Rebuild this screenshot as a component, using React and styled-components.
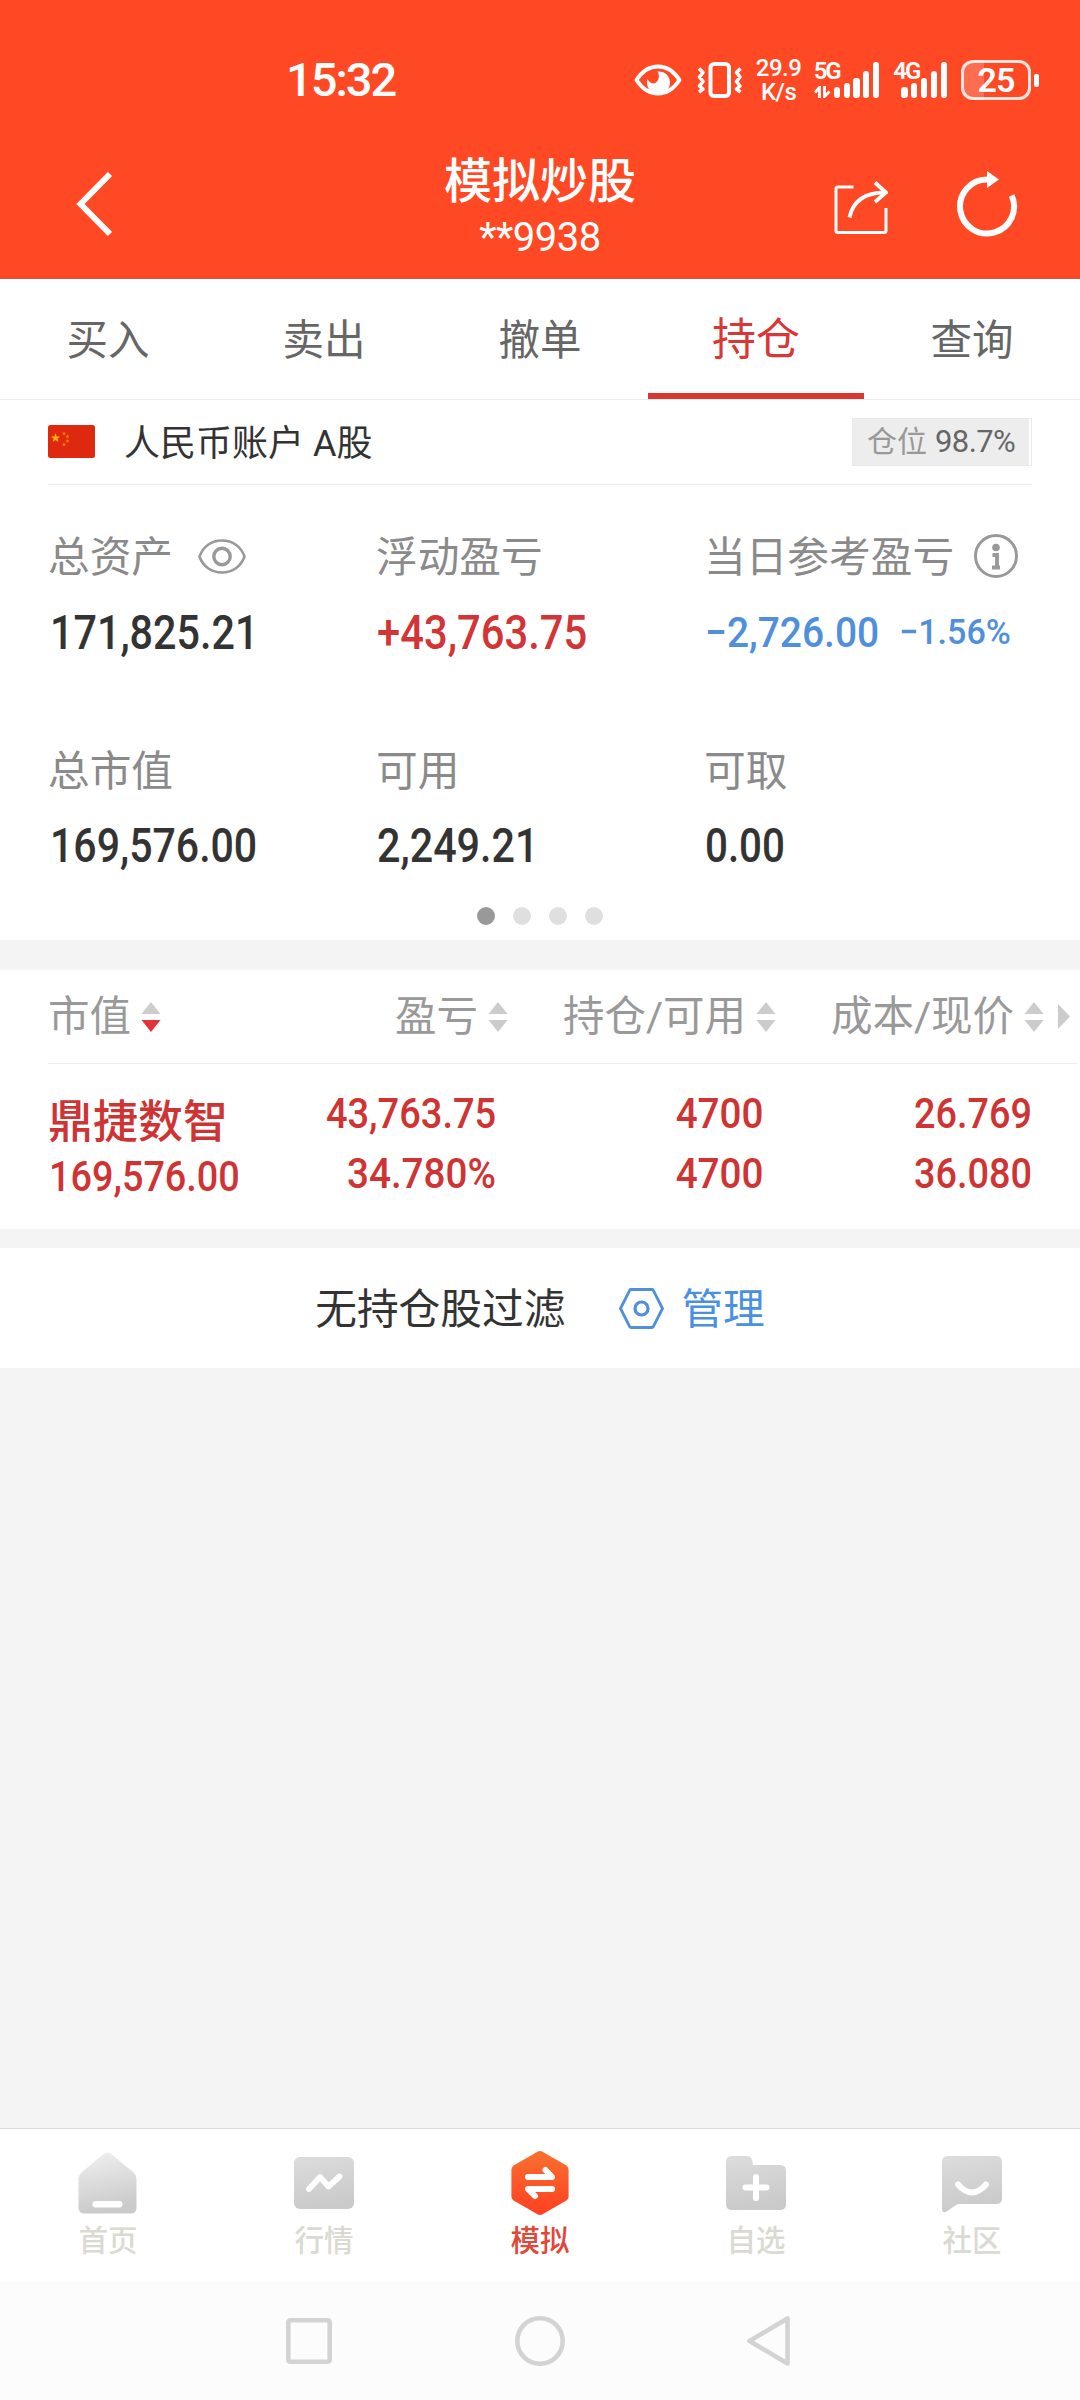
import React from 'react';
import styled, { createGlobalStyle } from 'styled-components';

const GlobalStyle = createGlobalStyle`
  * {
    box-sizing: border-box;
  }

  body {
    margin: 0;
    background: #f4f4f4;
    font-family: Roboto, "Noto Sans CJK SC", sans-serif;
    -webkit-font-smoothing: antialiased;
  }

  svg {
    display: block;
    flex: none;
  }
`;

const tabs = ['买入', '卖出', '撤单', '持仓', '查询'];

const columns = [
  { label: '市值', sort: 'desc' },
  { label: '盈亏' },
  { label: '持仓/可用' },
  { label: '成本/现价' },
];

const BARS = [11, 15, 20, 27, 36];

/* ---------- icons ---------- */

const StatusEye = () => (
  <svg width="48" height="32" viewBox="0 0 48 32">
    <path d="M2.5 16C8 7.5 15.500 2.500 24 2.500S40 7.500 45.500 16C40 24.500 32.500 29.500 24 29.500S8 24.500 2.500 16Z" fill="none" stroke="#fff" strokeWidth="4" strokeLinejoin="round" />
    <path d="M23.500 7.500C31 7 36 12 36 18.500S31 30 24.500 30 13 25 13 18.500q0-1.500.6-3.500c1.400 4 5.400 5.500 8.400 3.500s4-7.500 1.500-11Z" fill="#fff" />
  </svg>
);

const Vibrate = () => (
  <svg width="46" height="36" viewBox="0 0 46 36" fill="none" stroke="#fff" strokeWidth="4">
    <rect x="13.500" y="2" width="18.500" height="32" rx="3.500" />
    <path d="M2 6.500l4 4-3.500 4.500 3.500 4.500-3.500 4.500 3.500 3-4 3M43.500 6.500l-4 4 3.500 4.500-3.500 4.500 3.500 4.500-3.500 3 4 3" strokeWidth="3.600" strokeLinejoin="round" />
  </svg>
);

const DataArrows = () => (
  <svg width="17" height="12" viewBox="0 0 17 12" fill="none" stroke="#fff" strokeWidth="2.800">
    <path d="M1 6.500l4.500-5V12M10.500 0v10.500l5-5" />
  </svg>
);

const Back = () => (
  <svg width="38" height="66" viewBox="0 0 38 66">
    <path d="M35 3L5.500 33 35 63" fill="none" stroke="#fff" strokeWidth="6" />
  </svg>
);

const Share = () => (
  <svg width="54" height="53" viewBox="0 0 54 53" fill="none" stroke="#fff" strokeWidth="3">
    <path d="M19.500 6H4Q2 6 2 8v41.500q0 2 2 2h46q2 0 2-2V27" />
    <path d="M15.500 36.500C19 20 31 11.500 51 11.500" strokeWidth="3.800" />
    <path d="M41 1.500l11 10-11 9.500" strokeWidth="3.800" />
  </svg>
);

const Refresh = () => (
  <svg width="62" height="68" viewBox="0 0 62 68">
    <path d="M31 11a27 27 0 1 0 24.700 16" fill="none" stroke="#fff" strokeWidth="6" transform="translate(0 -1.500)" />
    <path d="M31 1v17l12-8.500Z" fill="#fff" />
  </svg>
);

const star = (cx, cy, r) =>
  Array.from({ length: 10 }, (_, i) => {
    const a = (Math.PI / 5) * i - Math.PI / 2;
    const k = i % 2 ? r * 0.4 : r;
    return `${cx + k * Math.cos(a)},${cy + k * Math.sin(a)}`;
  }).join(' ');

const Flag = () => (
  <svg width="47" height="33" viewBox="0 0 47 33">
    <rect width="47" height="33" rx="2.500" fill="#de2910" />
    <g fill="#ffb400">
      <polygon points={star(7.5, 13, 5)} />
      <g opacity=".65">
        <polygon points={star(16, 8.5, 2.2)} />
        <polygon points={star(19.5, 11.5, 2.2)} />
        <polygon points={star(19.5, 16, 2.2)} />
        <polygon points={star(16, 19.5, 2.2)} />
      </g>
    </g>
  </svg>
);

const Eye = () => (
  <svg width="48" height="35" viewBox="0 0 48 35" fill="none" stroke="#999">
    <path d="M1.500 17.500C5 7.500 13.500 1.500 24 1.500s19 6 22.500 16c-3.500 10-12 16-22.500 16S5 27.500 1.500 17.500Z" strokeWidth="2.600" />
    <circle cx="24" cy="17.500" r="8.200" strokeWidth="3.400" />
  </svg>
);

const Info = () => (
  <svg width="44" height="44" viewBox="0 0 44 44">
    <circle cx="22" cy="22" r="20.500" fill="none" stroke="#999" strokeWidth="3" />
    <circle cx="22" cy="13.500" r="3.800" fill="#999" />
    <path d="M18.500 21H23v12.500M18 33.500h8" fill="none" stroke="#999" strokeWidth="3.800" />
  </svg>
);

const Sort = ({ active }) => (
  <svg width="20" height="30" viewBox="0 0 20 30">
    <path d="M10 0l9.500 12H.5Z" fill="#ccc" />
    <path d="M10 30l9.500-12H.5Z" fill={active ? '#e0343a' : '#ccc'} />
  </svg>
);

const More = () => (
  <svg width="12" height="25" viewBox="0 0 12 25">
    <path d="M0 0l12 12.500L0 25Z" fill="#ccc" />
  </svg>
);

const Hexagon = () => (
  <svg width="45" height="41" viewBox="0 0 45 41" fill="none" stroke="#4f8fdb">
    <path d="M12 1.500h21q.8 0 1.200.7L43.500 20.500 34.200 38.800q-.4.700-1.200.700H12q-.8 0-1.200-.700L1.500 20.500 10.800 2.200q.4-.7 1.200-.7Z" strokeWidth="2.800" />
    <circle cx="22.500" cy="20.500" r="6.500" strokeWidth="3.200" />
  </svg>
);

const Grey = ({ id, from = '#dcdcdc' }) => (
  <linearGradient id={id} x1="0" y1="0" x2="0.2" y2="1">
    <stop offset="0" stopColor={from} />
    <stop offset="1" stopColor="#cacaca" />
  </linearGradient>
);

const HomeIcon = () => (
  <svg width="60" height="64" viewBox="0 0 60 64">
    <Grey id="home" from="#f0f0f0" />
    <path d="M26 2.800q3.500-2.600 7 0L55.500 21.500q3 2.600 3 6V56.500q0 6-6 6H6.500q-6 0-6-6v-29q0-3.400 3-6Z" fill="url(#home)" />
    <rect x="14.500" y="50" width="30" height="6.500" rx="3.200" fill="#fff" />
  </svg>
);

const TrendIcon = () => (
  <svg width="60" height="64" viewBox="0 0 60 64">
    <Grey id="trend" />
    <rect y="6" width="60" height="52" rx="6" fill="url(#trend)" />
    <path d="M15 38l11-12 8.500 9.500L45.500 25.500" fill="none" stroke="#fff" strokeWidth="5.800" strokeLinecap="round" strokeLinejoin="round" />
  </svg>
);

const TradeIcon = () => (
  <svg width="60" height="64" viewBox="0 0 60 64">
    <linearGradient id="trade" x1="0" y1="0" x2="0" y2="1">
      <stop offset="0" stopColor="#f8702f" />
      <stop offset="1" stopColor="#ff4021" />
    </linearGradient>
    <path d="M27.500.7q2.500-1.400 5 0L56 14.200q2.600 1.600 2.600 4.600v26.400q0 3-2.600 4.600L32.500 63.300q-2.500 1.400-5 0L4 49.800q-2.600-1.600-2.600-4.600V18.800q0-3 2.600-4.600Z" fill="url(#trade)" />
    <path d="M18 26h24L35.500 19M42 38H18l7 7" fill="none" stroke="#fff" strokeWidth="6" strokeLinecap="round" strokeLinejoin="round" />
  </svg>
);

const WatchIcon = () => (
  <svg width="60" height="64" viewBox="0 0 60 64">
    <Grey id="watch" />
    <path d="M6 5h15q5.500 0 6 9h27q6 0 6 6v33q0 6-6 6H6q-6 0-6-6V11q0-6 6-6Z" fill="url(#watch)" />
    <path d="M30 26v21M19.500 36.500h21" stroke="#fff" strokeWidth="6" strokeLinecap="round" />
  </svg>
);

const ForumIcon = () => (
  <svg width="60" height="64" viewBox="0 0 60 64">
    <Grey id="forum" />
    <path d="M6 5h48q6 0 6 6v36q0 6-6 6H15.500L4.500 60.500Q0 62.500 0 58V11q0-6 6-6Z" fill="url(#forum)" />
    <path d="M16 33.500q14 16 28 0" fill="none" stroke="#fff" strokeWidth="6" strokeLinecap="round" />
  </svg>
);

const bottomItems = [
  { label: '首页', Icon: HomeIcon },
  { label: '行情', Icon: TrendIcon },
  { label: '模拟', Icon: TradeIcon, active: true },
  { label: '自选', Icon: WatchIcon },
  { label: '社区', Icon: ForumIcon },
];

/* ---------- layout ---------- */

const Screen = styled.div`
  display: flex;
  flex-direction: column;
  width: 1080px;
  height: 2400px;
  overflow: hidden;
  background: #f4f4f4;
  color: #333;
`;

const Top = styled.header`
  height: 279px;
  background: #ff4925;
  color: #fff;
  border-bottom: 1px solid #d3583f;
`;

const StatusBar = styled.div`
  display: flex;
  align-items: center;
  height: 120px;
  padding: 40px 41px 0 286px;
`;

const Clock = styled.span`
  flex: 1;
  font-size: 47px;
  font-weight: 500;
  line-height: 82px;
  letter-spacing: -2px;
`;

const StatusIcons = styled.div`
  display: flex;
  align-items: center;
`;

const VibrateSlot = styled.div`
  margin: 0 13px 0 15px;
`;

const Speed = styled.div`
  width: 46px;
  font-size: 24px;
  line-height: 24px;
  font-weight: 500;
  letter-spacing: -0.5px;
  text-align: center;
`;

const Network = styled.div`
  display: flex;
  align-items: flex-end;
  height: 36px;
  margin-left: ${(p) => p.$gap}px;
`;

const NetworkLabel = styled.div`
  display: flex;
  flex-direction: column;
  justify-content: space-between;
  width: ${(p) => p.$width}px;
  height: 36px;
  font-size: 24px;
  line-height: 18px;
  font-weight: 600;
  white-space: nowrap;
  letter-spacing: -2px;
`;

const Bars = styled.div`
  display: flex;
  align-items: flex-end;
  gap: 3.7px;
`;

const Bar = styled.i`
  width: 6.2px;
  height: ${(p) => p.$height}px;
  border-radius: 3px;
  background: #fff;
`;

const Battery = styled.div`
  display: flex;
  align-items: center;
  justify-content: center;
  width: 70px;
  height: 40px;
  margin-left: 14px;
  border: 3px solid rgba(255, 255, 255, 0.85);
  border-radius: 12px;
  background: linear-gradient(90deg, rgba(255, 255, 255, 0.2) 20px, transparent 20px);
  font-size: 34px;
  font-weight: 600;
  letter-spacing: -1px;
  line-height: 34px;
`;

const BatteryTip = styled.i`
  width: 5px;
  height: 13px;
  margin-left: 3px;
  border-radius: 2px;
  background: #fff;
`;

const TitleBar = styled.div`
  display: grid;
  grid-template-columns: 315px 300px 1fr;
  align-items: center;
  height: 158px;
  padding: 10px 62px 0 75px;
`;

const Titles = styled.div`
  display: flex;
  flex-direction: column;
  align-items: center;
  margin-top: 6px;
  white-space: nowrap;
`;

const Title = styled.h1`
  margin: 0;
  font-size: 48px;
  font-weight: 500;
  line-height: 62px;
`;

const Subtitle = styled.span`
  font-size: 40px;
  line-height: 50px;
  letter-spacing: -0.5px;
`;

const Actions = styled.div`
  display: flex;
  align-items: center;
  justify-content: flex-end;
  gap: 68px;
`;

const ShareSlot = styled.div`
  padding-top: 6px;
`;

const Tabs = styled.nav`
  display: flex;
  height: 121px;
  background: #fff;
  border-bottom: 1px solid #ededed;
`;

const Tab = styled.div`
  flex: 1;
  height: 120px;
  padding-top: 1px;
  text-align: center;
  line-height: 121px;
  font-size: ${(p) => (p.$active ? 44 : 41.5)}px;
  color: ${(p) => (p.$active ? '#d93636' : '#666')};
  border-bottom: 6px solid ${(p) => (p.$active ? '#da3734' : 'transparent')};
`;

const Summary = styled.section`
  height: 540px;
  padding: 0 48px;
  background: #fff;
`;

const Account = styled.div`
  display: flex;
  align-items: center;
  height: 85px;
  padding-bottom: 1px;
  border-bottom: 1px solid #ededed;
`;

const AccountName = styled.span`
  flex: 1;
  margin-left: 29px;
  padding-top: 4px;
  font-size: 36px;
  line-height: 80px;
`;

const Position = styled.div`
  width: 180px;
  height: 48px;
  padding-right: 2px;
  border: 1px solid #e9e9e9;
`;

const PositionFill = styled.div`
  display: flex;
  align-items: center;
  height: 46px;
  padding-left: 14px;
  gap: 8px;
  background: #ededed;
  color: #666;
  font-size: 31px;
  line-height: 48px;
  letter-spacing: -0.6px;
`;

const PositionLabel = styled.span`
  color: #999;
  font-size: 30px;
  letter-spacing: 0;
`;

const Figures = styled.div`
  display: grid;
  grid-template-columns: repeat(3, 328px);
  row-gap: 83px;
  padding-top: 41px;
`;

const FigureLabel = styled.div`
  display: flex;
  align-items: center;
  height: 60px;
  color: #8a8a8a;
  font-size: 41.7px;
  line-height: 60px;
  white-space: nowrap;
`;

const FigureText = styled.span`
  padding-top: 3px;
`;

const IconSlot = styled.span`
  margin-left: ${(p) => p.$gap}px;
`;

const FigureValues = styled.div`
  display: flex;
  align-items: center;
  height: 48px;
  margin-top: ${(p) => p.$gap}px;
  padding-left: ${(p) => p.$inset || 0}px;
  gap: ${(p) => p.$spread || 0}px;
  color: ${(p) => p.$color};
`;

const Num = styled.span`
  display: inline-block;
  font-size: ${(p) => p.$size}px;
  line-height: 1.1;
  font-weight: 500;
  white-space: nowrap;
  transform: scaleX(${(p) => p.$stretch || 0.86});
  transform-origin: ${(p) => p.$origin || 'left'} center;
`;

const Dots = styled.div`
  display: flex;
  justify-content: center;
  gap: 18px;
  margin-top: 37px;
`;

const Dot = styled.i`
  width: 18px;
  height: 18px;
  border-radius: 50%;
  background: ${(p) => (p.$active ? '#999' : '#dfdfdf')};
`;

const Holdings = styled.section`
  height: 259px;
  margin-top: 30px;
  padding-left: 48px;
  background: #fff;
`;

const HoldingGrid = styled.div`
  display: grid;
  grid-template-columns: 180px 280px 268px 268px 1fr;
`;

const HoldingHead = styled(HoldingGrid)`
  height: 94px;
  margin-right: 3px;
  border-bottom: 1px solid #ededed;
`;

const HeadCell = styled.div`
  display: flex;
  align-items: center;
  justify-content: ${(p) => (p.$left ? 'flex-start' : 'flex-end')};
  gap: 10px;
  color: #999;
  font-size: 41.5px;
  line-height: 92px;
  white-space: nowrap;
`;

const HeadText = styled.span`
  padding-top: 1px;
`;

const MoreCell = styled.div`
  display: flex;
  align-items: center;
  padding-left: 14px;
`;

const HoldingRow = styled(HoldingGrid)`
  padding-top: 20px;
  color: #cf3434;
`;

const StockCell = styled.div`
  display: flex;
  flex-direction: column;
  align-items: flex-start;
  padding: 8px 0 0 1px;
`;

const StockName = styled.span`
  margin-left: -1px;
  font-size: 45px;
  font-weight: 500;
  line-height: 62px;
  white-space: nowrap;
`;

const ValueCell = styled.div`
  display: flex;
  flex-direction: column;
  align-items: flex-end;
  gap: 14px;
  padding: 7px ${(p) => p.$inset || 12}px 0 0;
`;

const Filter = styled.section`
  display: flex;
  align-items: center;
  justify-content: center;
  height: 120px;
  margin-top: 19px;
  background: #fff;
  font-size: 41.7px;
  line-height: 114px;
`;

const FilterText = styled.span`
  padding-top: 3px;
`;

const Manage = styled.span`
  display: flex;
  align-items: center;
  gap: 17px;
  margin-left: 54px;
  color: #4a90e2;
`;

const Spacer = styled.div`
  flex: 1;
`;

const BottomBar = styled.nav`
  display: flex;
  height: 154px;
  border-top: 1px solid #dadada;
  background: #fff;
`;

const BottomItem = styled.div`
  flex: 1;
  display: flex;
  flex-direction: column;
  align-items: center;
  padding-top: 22px;
  color: ${(p) => (p.$active ? '#e0483a' : '#dadad2')};
  font-size: 29.5px;
  font-weight: 500;
  line-height: 44px;
`;

const BottomLabel = styled.span`
  margin-top: 4px;
`;

const SystemNav = styled.div`
  display: flex;
  align-items: center;
  justify-content: center;
  height: 118px;
  background: #fcfcfc;
`;

const NavButton = styled.div`
  display: flex;
  justify-content: center;
  width: 230px;
`;

const Signal = () => (
  <Bars>
    {BARS.map((h) => (
      <Bar key={h} $height={h} />
    ))}
  </Bars>
);

const App = () => {
  return (
    <>
      <GlobalStyle />
      <Screen>
        <Top>
          <StatusBar>
            <Clock>15:32</Clock>
            <StatusIcons>
              <StatusEye />
              <VibrateSlot>
                <Vibrate />
              </VibrateSlot>
              <Speed>
                29.9<br />K/s
              </Speed>
              <Network $gap={12}>
                <NetworkLabel $width={20}>
                  5G
                  <DataArrows />
                </NetworkLabel>
                <Signal />
              </Network>
              <Network $gap={14}>
                <NetworkLabel $width={8}>4G</NetworkLabel>
                <Signal />
              </Network>
              <Battery>25</Battery>
              <BatteryTip />
            </StatusIcons>
          </StatusBar>
          <TitleBar>
            <Back />
            <Titles>
              <Title>模拟炒股</Title>
              <Subtitle>**9938</Subtitle>
            </Titles>
            <Actions>
              <ShareSlot><Share /></ShareSlot>
              <Refresh />
            </Actions>
          </TitleBar>
        </Top>

        <Tabs>
          {tabs.map((t) => (
            <Tab key={t} $active={t === '持仓'}>{t}</Tab>
          ))}
        </Tabs>

        <Summary>
          <Account>
            <Flag />
            <AccountName>人民币账户 A股</AccountName>
            <Position>
              <PositionFill>
                <PositionLabel>仓位</PositionLabel>
                98.7%
              </PositionFill>
            </Position>
          </Account>
          <Figures>
            <div>
              <FigureLabel>
                <FigureText>总资产</FigureText>
                <IconSlot $gap={25}><Eye /></IconSlot>
              </FigureLabel>
              <FigureValues $gap={23} $inset={2}><Num $size={48}>171,825.21</Num></FigureValues>
            </div>
            <div>
              <FigureLabel><FigureText>浮动盈亏</FigureText></FigureLabel>
              <FigureValues $gap={23} $inset={1} $color="#d23535"><Num $size={48} $stretch={0.87}>+43,763.75</Num></FigureValues>
            </div>
            <div>
              <FigureLabel>
                <FigureText>当日参考盈亏</FigureText>
                <IconSlot $gap={20}><Info /></IconSlot>
              </FigureLabel>
              <FigureValues $gap={23} $inset={1} $color="#4f8fdb" $spread={2}>
                <Num $size={43} $stretch={0.905}>−2,726.00</Num>
                <Num $size={35.5} $stretch={0.96}>−1.56%</Num>
              </FigureValues>
            </div>
            <div>
              <FigureLabel><FigureText>总市值</FigureText></FigureLabel>
              <FigureValues $gap={22} $inset={2}><Num $size={48} $stretch={0.855}>169,576.00</Num></FigureValues>
            </div>
            <div>
              <FigureLabel><FigureText>可用</FigureText></FigureLabel>
              <FigureValues $gap={22} $inset={1}><Num $size={48}>2,249.21</Num></FigureValues>
            </div>
            <div>
              <FigureLabel><FigureText>可取</FigureText></FigureLabel>
              <FigureValues $gap={22} $inset={1}><Num $size={48} $stretch={0.84}>0.00</Num></FigureValues>
            </div>
          </Figures>
          <Dots>
            <Dot $active />
            <Dot />
            <Dot />
            <Dot />
          </Dots>
        </Summary>

        <Holdings>
          <HoldingHead>
            {columns.map((c, i) => (
              <HeadCell key={c.label} $left={i === 0}>
                <HeadText>{c.label}</HeadText>
                <Sort active={c.sort === 'desc'} />
              </HeadCell>
            ))}
            <MoreCell><More /></MoreCell>
          </HoldingHead>
          <HoldingRow>
            <StockCell>
              <StockName>鼎捷数智</StockName>
              <Num $size={42} $stretch={0.9}>169,576.00</Num>
            </StockCell>
            <ValueCell>
              <Num $size={42} $stretch={0.905} $origin="right">43,763.75</Num>
              <Num $size={42} $stretch={0.92} $origin="right">34.780%</Num>
            </ValueCell>
            <ValueCell $inset={13}>
              <Num $size={42} $stretch={0.92} $origin="right">4700</Num>
              <Num $size={42} $stretch={0.92} $origin="right">4700</Num>
            </ValueCell>
            <ValueCell>
              <Num $size={42} $stretch={0.9} $origin="right">26.769</Num>
              <Num $size={42} $stretch={0.9} $origin="right">36.080</Num>
            </ValueCell>
          </HoldingRow>
        </Holdings>

        <Filter>
          <FilterText>无持仓股过滤</FilterText>
          <Manage>
            <Hexagon />
            <FilterText>管理</FilterText>
          </Manage>
        </Filter>

        <Spacer />

        <BottomBar>
          {bottomItems.map(({ label, Icon, active }) => (
            <BottomItem key={label} $active={active}>
              <Icon />
              <BottomLabel>{label}</BottomLabel>
            </BottomItem>
          ))}
        </BottomBar>
        <SystemNav>
          <NavButton>
            <svg width="48" height="46" viewBox="0 0 48 46">
              <rect x="2.300" y="2.300" width="41.400" height="41.400" rx="2" fill="none" stroke="#d3d3d3" strokeWidth="4.600" />
            </svg>
          </NavButton>
          <NavButton>
            <svg width="50" height="50" viewBox="0 0 50 50">
              <circle cx="25" cy="25" r="22.700" fill="none" stroke="#d3d3d3" strokeWidth="4.600" />
            </svg>
          </NavButton>
          <NavButton>
            <svg width="46" height="50" viewBox="0 0 46 50">
              <path d="M2.500 25L40.500 2.500v45Z" fill="none" stroke="#d3d3d3" strokeWidth="4.600" strokeLinejoin="round" />
            </svg>
          </NavButton>
        </SystemNav>
      </Screen>
    </>
  );
}

export default App;
